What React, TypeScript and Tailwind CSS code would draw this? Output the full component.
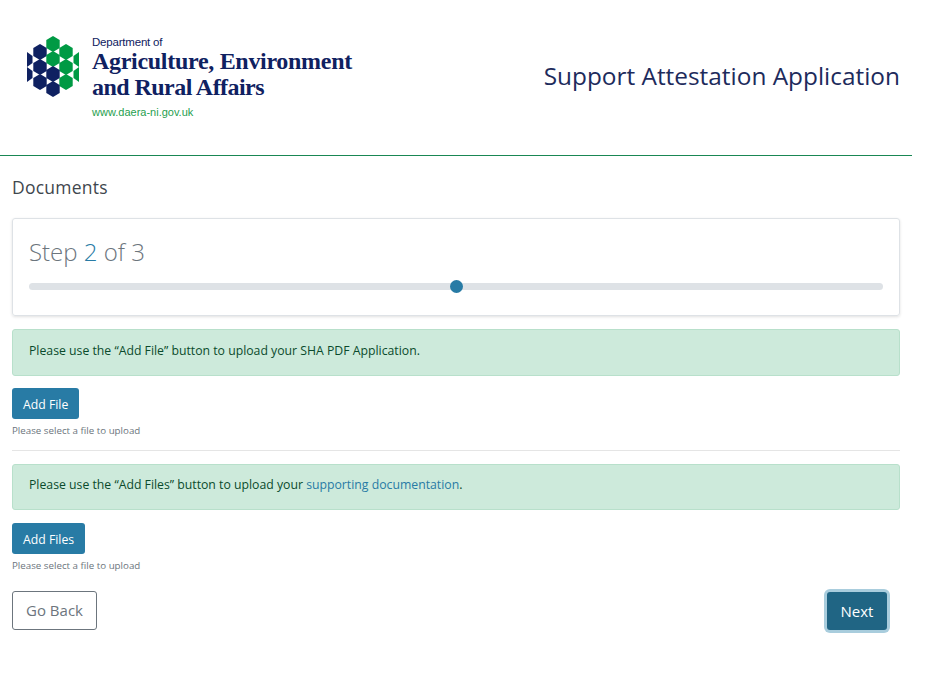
const hexes: [number, number, string][] = [
  [54, 44, "#009a44"],
  [41, 52, "#0f2161"],
  [67, 52, "#009a44"],
  [54, 59, "#009a44"],
  [41, 67, "#0f2161"],
  [67, 67, "#009a44"],
  [54, 74, "#0f2161"],
  [41, 82, "#0f2161"],
  [67, 82, "#009a44"],
  [54, 89, "#0f2161"],
];

function hexPoints(cx: number, cy: number) {
  const r = 8;
  const w = 6.7;
  return [
    [cx, cy - r],
    [cx + w, cy - r / 2],
    [cx + w, cy + r / 2],
    [cx, cy + r],
    [cx - w, cy + r / 2],
    [cx - w, cy - r / 2],
  ]
    .map((p) => p.join(","))
    .join(" ");
}

function LogoMark() {
  return (
    <svg width="53" height="62" viewBox="28 36 53 62" className="shrink-0">
      {hexes.map(([x, y, c]) => (
        <polygon key={`${x}-${y}`} points={hexPoints(x, y)} fill={c} />
      ))}
      <polygon points="28,52 33.5,56 33.5,63 28,67" fill="#0f2161" />
      <polygon points="28,67 33.5,71 33.5,78 28,82" fill="#0f2161" />
      <polygon points="80,52 74.5,56 74.5,63 80,67" fill="#009a44" />
      <polygon points="80,67 74.5,71 74.5,78 80,82" fill="#009a44" />
    </svg>
  );
}

function Logo() {
  return (
    <div className="flex items-start gap-[12px] pl-[27px] pt-[36px]">
      <LogoMark />
      <div className="font-['Liberation_Serif',serif] text-[#0f2161]">
        <div className="font-['Liberation_Sans',sans-serif] text-[11.5px] leading-[12px] tracking-[-0.2px]">Department of</div>
        <div className="text-[24px] leading-[26px] font-bold whitespace-nowrap tracking-[-0.3px]">Agriculture, Environment</div>
        <div className="text-[24px] leading-[26px] font-bold whitespace-nowrap tracking-[-0.55px]">and Rural Affairs</div>
        <div className="mt-[6px] font-['Liberation_Sans',sans-serif] text-[11px] leading-[12px] text-[#1fa04f]">www.daera-ni.gov.uk</div>
      </div>
    </div>
  );
}

function UploadBlock({ label }: { label: string }) {
  return (
    <div>
      <button className="block h-[31px] rounded-[3px] bg-[#287ba5] px-[11px] pt-[3px] text-[12.25px] leading-[28px] text-white">{label}</button>
      <div className="mt-[5px] text-[9.75px] leading-[13px] text-[#6c757d]">Please select a file to upload</div>
    </div>
  );
}

export default function App() {
  return (
    <div className="min-h-[679px] w-[934px] bg-white font-['Open_Sans',sans-serif] text-[#212529]">
      <header className="flex h-[156px] w-[912px] justify-between border-b border-[#198754]">
        <Logo />
        <h1 className="pr-[12px] pt-[59px] text-[24.4px] leading-[34px] text-[#1d2b5c]">Support Attestation Application</h1>
      </header>
      <main className="w-[912px] px-[12px]">
        <h2 className="mt-[19px] mb-[19px] text-[17.5px] leading-[24px] tracking-[0.25px] text-[#3f474e]">Documents</h2>
        <section className="h-[98px] rounded-[3px] border border-[#dee2e6] px-[16px] pt-[16px] shadow-[0_1px_3px_rgba(0,0,0,0.12)]">
          <div className="text-[24px] leading-[34px] font-light text-[#6c757d]">
            Step <span className="text-[#287ba5]">2</span> of 3
          </div>
          <div className="relative mt-[14px] h-[7px] rounded-full bg-[#dee2e6]">
            <span className="absolute left-[421px] top-[-3px] h-[13px] w-[13px] rounded-full bg-[#287ba5]" />
          </div>
        </section>
        <div className="mt-[13px] h-[47px] rounded-[3px] border border-[#b8e0cb] bg-[#cdeadb] px-[16px] text-[12.25px] leading-[42px] text-[#0a4a2c]">
          Please use the “Add File” button to upload your SHA PDF Application.
        </div>
        <div className="mt-[12px]">
          <UploadBlock label="Add File" />
        </div>
        <hr className="mt-[13px] border-[#e5e5e5]" />
        <div className="mt-[13px] h-[46px] rounded-[3px] border border-[#b8e0cb] bg-[#cdeadb] px-[16px] text-[12.25px] leading-[40px] text-[#0a4a2c]">
          Please use the “Add Files” button to upload your <span className="text-[#287ba5]">supporting documentation</span>.
        </div>
        <div className="mt-[13px]">
          <UploadBlock label="Add Files" />
        </div>
        <div className="mt-[19px] flex items-center justify-between pr-[13px]">
          <button className="h-[39px] w-[85px] rounded-[3px] border border-[#6c757d] text-[15px] text-[#6c757d]">Go Back</button>
          <button className="h-[38px] w-[60px] rounded-[3px] bg-[#206584] pt-[1px] text-[15px] text-white shadow-[0_0_0_3px_#a9cddd]">Next</button>
        </div>
      </main>
    </div>
  );
}
